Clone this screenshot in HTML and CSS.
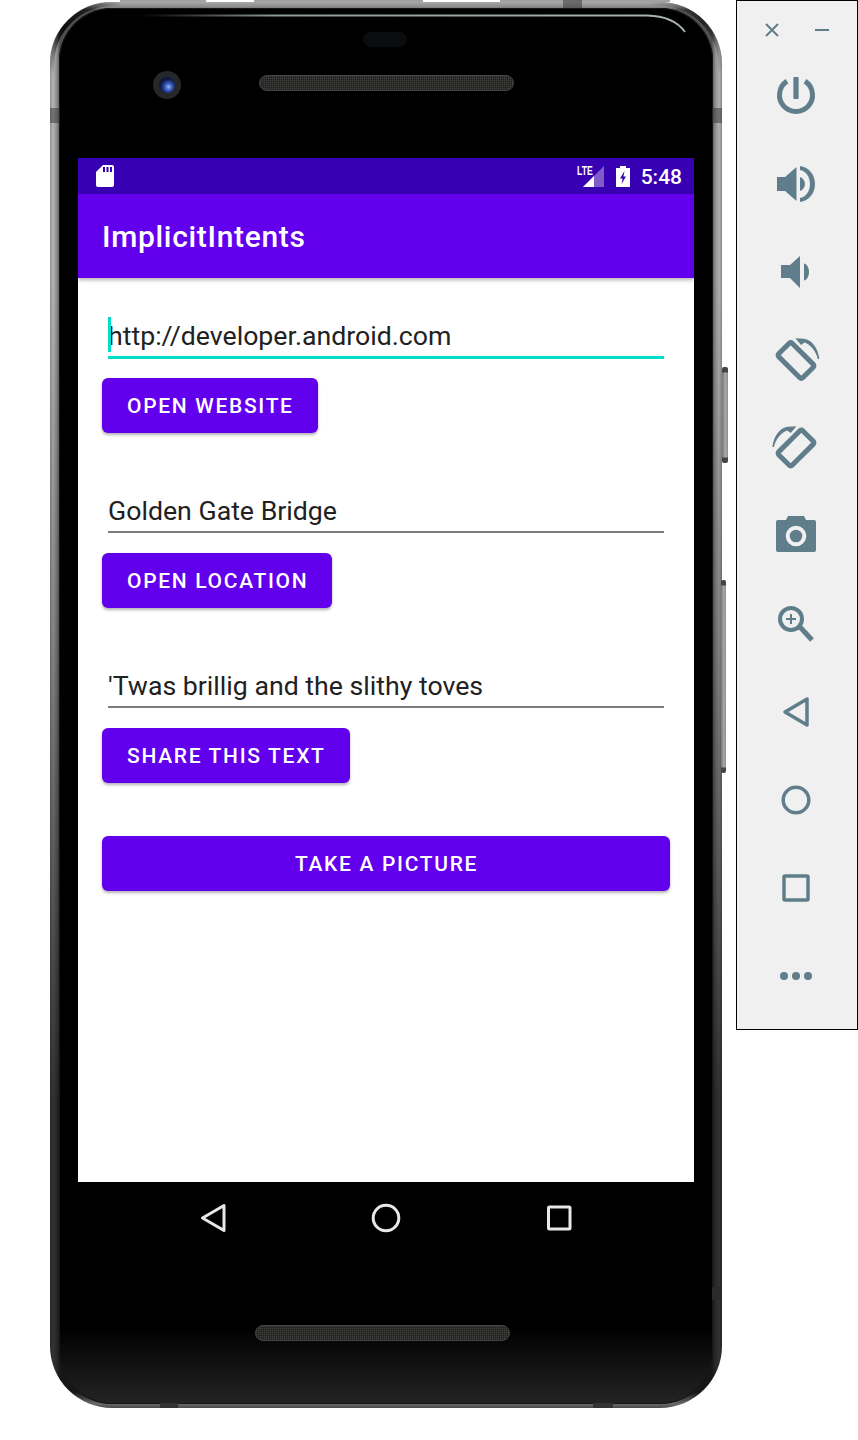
FILE: index.html
```html
<!DOCTYPE html>
<html lang="en">
<head>
    <meta charset="UTF-8">
    <meta name="viewport" content="width=device-width, initial-scale=1.0">
    <title>ImplicitIntents</title>
    <link rel="stylesheet" href="styles.css">
</head>
<body>
    <div class="phone">
        <!-- Hardware details on the bezel -->
        <div class="side-key side-key-top"></div>
        <div class="side-key side-key-bottom"></div>
        <div class="strip strip-a"></div>
        <div class="strip strip-b"></div>
        <div class="strip strip-c"></div>
        <div class="seam seam-top"></div>
        <div class="seam seam-left"></div>
        <div class="seam seam-right"></div>
        <div class="seam seam-right-low"></div>
        <div class="seam seam-bottom-left"></div>
        <div class="seam seam-bottom-right"></div>
        <svg class="glare" width="672" height="1406" viewBox="0 0 672 1406">
            <defs>
                <linearGradient id="glare-fade" gradientUnits="userSpaceOnUse" x1="90" x2="636" y1="0" y2="0">
                    <stop offset="0" stop-color="#8f9a9c" stop-opacity="0"/>
                    <stop offset="0.25" stop-color="#8f9a9c"/>
                    <stop offset="1" stop-color="#a9b3b4"/>
                </linearGradient>
                <linearGradient id="corner-left" gradientUnits="userSpaceOnUse" x1="0" y1="70" x2="70" y2="0">
                    <stop offset="0" stop-color="#000" stop-opacity="0"/>
                    <stop offset="0.4" stop-color="#000" stop-opacity="0.85"/>
                    <stop offset="0.7" stop-color="#000" stop-opacity="0.6"/>
                    <stop offset="1" stop-color="#000" stop-opacity="0"/>
                </linearGradient>
                <linearGradient id="corner-right" gradientUnits="userSpaceOnUse" x1="672" y1="70" x2="602" y2="0">
                    <stop offset="0" stop-color="#000" stop-opacity="0"/>
                    <stop offset="0.5" stop-color="#000" stop-opacity="0.55"/>
                    <stop offset="1" stop-color="#000" stop-opacity="0"/>
                </linearGradient>
            </defs>
            <path d="M90 13.5H597C616 14 628 20 635 30" fill="none" stroke="url(#glare-fade)" stroke-width="1.8"/>
            <path d="M2 72V62A60 60 0 0 1 62 2H72" fill="none" stroke="url(#corner-left)" stroke-width="4.5"/>
            <path d="M670 72V62A60 60 0 0 0 610 2H600" fill="none" stroke="url(#corner-right)" stroke-width="4"/>
        </svg>
        <div class="sensor"></div>
        <div class="camera"><div class="lens"></div></div>
        <div class="speaker speaker-top"></div>
        <div class="speaker speaker-bottom"></div>

        <div class="bezel">
            <div class="screen">
                <div class="status-bar">
                    <svg class="sd-icon" width="18" height="22" viewBox="0 0 18 22">
                        <path d="M7 0H16a2 2 0 0 1 2 2V20a2 2 0 0 1-2 2H2a2 2 0 0 1-2-2V7Z" fill="#fff"/>
                        <path d="M7 2h2v5H7zM10.5 2h2v5h-2zM14 2h2v5h-2z" fill="#3700b3"/>
                    </svg>
                    <div class="status-right">
                        <div class="signal">
                            <span class="lte">LTE</span>
                            <svg width="21" height="21" viewBox="0 0 21 21">
                                <path d="M21 0V21H0Z" fill="#7f5cc8"/>
                                <path d="M11 10V21H0Z" fill="#fff"/>
                            </svg>
                        </div>
                        <svg class="battery" width="14" height="21" viewBox="0 0 14 21">
                            <path d="M4 0h6v2h4v19H0V2h4Z" fill="#fff"/>
                            <path d="M8.5 5 4 12.5h2.6L5.5 18 10 10.5H7.4Z" fill="#3700b3"/>
                        </svg>
                        <span class="clock">5:48</span>
                    </div>
                </div>
                <div class="app-bar">ImplicitIntents</div>
                <div class="content">
                    <div class="group">
                        <div class="field field-focused"><span class="cursor"></span>http://developer.android.com</div>
                        <button class="btn">Open Website</button>
                    </div>
                    <div class="group">
                        <div class="field">Golden Gate Bridge</div>
                        <button class="btn">Open Location</button>
                    </div>
                    <div class="group group-last">
                        <div class="field">'Twas brillig and the slithy toves</div>
                        <button class="btn">Share This Text</button>
                    </div>
                    <button class="btn btn-wide">Take a Picture</button>
                </div>
            </div>
            <div class="nav-bar">
                <svg width="40" height="40" viewBox="0 0 40 40"><path d="M9.5 20 31 7.5V32.5Z"/></svg>
                <svg width="40" height="40" viewBox="0 0 40 40"><circle cx="20" cy="20" r="12.8"/></svg>
                <svg width="40" height="40" viewBox="0 0 40 40"><rect x="9.5" y="9" width="21.5" height="22" rx="1"/></svg>
            </div>
        </div>
    </div>

    <div class="panel">
        <div class="panel-top">
            <svg width="16" height="16" viewBox="0 0 16 16"><path d="M2 2 14 14M14 2 2 14"/></svg>
            <svg width="16" height="16" viewBox="0 0 16 16"><path d="M1 8H15"/></svg>
        </div>
        <!-- power -->
        <div class="tool"><svg width="44" height="44" viewBox="0 0 44 44">
            <path class="line-5" d="M13 7.2A16.5 16.5 0 1 0 31 7.2"/>
            <rect class="solid" x="19.4" y="3" width="5.2" height="22" rx="1"/>
        </svg></div>
        <!-- volume up -->
        <div class="tool"><svg width="44" height="44" viewBox="0 0 44 44">
            <path class="solid" d="M3 15H11L22.5 5V39L11 29H3Z"/>
            <path class="solid" d="M26 15C29 16 31 19 31 22C31 25 29 28 26 29Z"/>
            <path class="solid" d="M26 4C35 5 41 13 41 22C41 31 35 39 26 40V36C32 35 36 29 36 22C36 15 32 9 26 8Z"/>
        </svg></div>
        <!-- volume down -->
        <div class="tool"><svg width="44" height="44" viewBox="0 0 44 44">
            <path class="solid" d="M7 15H16L26 6V38L16 28H7Z"/>
            <path class="solid" d="M30 13.5C33 14 35 18 35 22C35 26 33 30 30 30.5Z"/>
        </svg></div>
        <!-- rotate left -->
        <div class="tool"><svg width="44" height="44" viewBox="0 0 44 44">
            <rect class="line-5" x="5" y="13" width="34" height="19" rx="2" transform="rotate(45 22 22.5)"/>
            <path class="solid" d="M21.3.3 30 .8C38 2 44 10 45.3 21H43.7C42 13 37 7 30.5 4.5L27 7Z"/>
        </svg></div>
        <!-- rotate right -->
        <div class="tool"><svg width="44" height="44" viewBox="0 0 44 44">
            <rect class="line-5" x="5" y="12.5" width="34" height="19" rx="2" transform="rotate(-45 22 22)"/>
            <path class="solid" d="M21.3.3 30 .8C38 2 44 10 45.3 21H43.7C42 13 37 7 30.5 4.5L27 7Z" transform="matrix(-1 0 0 1 43.7 0)"/>
        </svg></div>
        <!-- screenshot -->
        <div class="tool"><svg width="44" height="44" viewBox="0 0 44 44">
            <path class="solid" d="M4 6H12L14 2H30L32 6H40A2 2 0 0 1 42 8V36A2 2 0 0 1 40 38H4A2 2 0 0 1 2 36V8A2 2 0 0 1 4 6Z"/>
            <circle class="ring" cx="22" cy="22" r="8.3"/>
        </svg></div>
        <!-- zoom -->
        <div class="tool"><svg width="44" height="44" viewBox="0 0 44 44">
            <circle class="line-4" cx="17" cy="17" r="11"/>
            <path class="line-2" d="M12 17H22M17 12V22"/>
            <path class="line-5" d="M26 25 38 38"/>
        </svg></div>
        <!-- back -->
        <div class="tool"><svg width="44" height="44" viewBox="0 0 44 44"><path class="line-3" d="M11 22 33 9V35Z"/></svg></div>
        <!-- home -->
        <div class="tool"><svg width="44" height="44" viewBox="0 0 44 44"><circle class="line-3" cx="22" cy="22" r="12.8"/></svg></div>
        <!-- overview -->
        <div class="tool"><svg width="44" height="44" viewBox="0 0 44 44"><rect class="line-3" x="10" y="10" width="24" height="24" rx="1"/></svg></div>
        <!-- more -->
        <div class="tool"><svg width="44" height="44" viewBox="0 0 44 44">
            <circle class="solid" cx="10" cy="22" r="4"/>
            <circle class="solid" cx="22" cy="22" r="4"/>
            <circle class="solid" cx="34" cy="22" r="4"/>
        </svg></div>
    </div>
</body>
</html>
```

FILE: styles.css
```css
html, body {
    margin: 0;
    height: 1440px;
    background: #fff;
    overflow: hidden;
}
body {
    display: flex;
    align-items: flex-start;
    padding-left: 50px;
    box-sizing: border-box;
    font-family: Roboto, sans-serif;
}

/* Device shell */
.phone {
    position: relative;
    flex: none;
    width: 672px;
    height: 1406px;
    margin-top: 2px;
    padding: 6px 9px 4px 9px;
    box-sizing: border-box;
    border-radius: 62px;
    background:
        linear-gradient(to bottom, #a8a8a8 0, #8a8a8a 5px, transparent 8px),
        linear-gradient(to bottom, transparent 1390px, #6a6a6a 1402px, #4a4a4a 1406px),
        linear-gradient(to bottom, transparent 20%, rgba(0, 0, 0, 0.25) 45%, rgba(0, 0, 0, 0.72) 78%),
        linear-gradient(to right, #8f8f8f 0, #b5b5b5 3px, #8a8a8a 7px, #505050 10px, #505050 662px, #8a8a8a 665px, #b0b0b0 669px, #888 672px);
}
.bezel {
    height: 100%;
    box-sizing: border-box;
    padding: 150px 19px 0;
    border-radius: 53px;
    background: linear-gradient(to bottom, #000 94.5%, #242424 100%);
    box-shadow: inset 0 0 0 1px #161616;
}
.side-key {
    position: absolute;
    background:
        linear-gradient(to bottom, #444 0 5px, transparent 6px, transparent calc(100% - 6px), #444 calc(100% - 5px)),
        linear-gradient(to right, #777, #aaa 60%, #8a8a8a);
    border-radius: 2px;
}
.side-key-top {
    right: -6px;
    top: 365px;
    width: 6px;
    height: 96px;
}
.side-key-bottom {
    right: -4px;
    top: 578px;
    width: 5px;
    height: 193px;
}
.strip {
    position: absolute;
    top: -2px;
    height: 2px;
    background: #a3a3a3;
}
.strip-a {
    left: 70px;
    width: 86px;
}
.strip-b {
    left: 204px;
    width: 169px;
}
.strip-c {
    left: 450px;
    width: 170px;
}
.seam {
    position: absolute;
    background: rgba(50, 50, 50, 0.5);
}
.seam-top {
    left: 513px;
    top: -2px;
    width: 19px;
    height: 8px;
}
.seam-left {
    left: 0;
    top: 106px;
    width: 10px;
    height: 15px;
}
.seam-right {
    right: 0;
    top: 106px;
    width: 10px;
    height: 15px;
}
.seam-right-low {
    right: 0;
    top: 1285px;
    width: 10px;
    height: 13px;
    background: #2a2a2a;
}
.seam-bottom-left {
    left: 110px;
    bottom: 0;
    width: 18px;
    height: 5px;
    background: #333;
}
.seam-bottom-right {
    left: 543px;
    bottom: 0;
    width: 20px;
    height: 5px;
    background: #333;
}
.glare {
    position: absolute;
    left: 0;
    top: 0;
}
.sensor {
    position: absolute;
    left: 313px;
    top: 30px;
    width: 44px;
    height: 15px;
    border-radius: 8px;
    background: #0b0c10;
}
.camera {
    position: absolute;
    left: 103px;
    top: 69px;
    width: 28px;
    height: 28px;
    display: flex;
    align-items: center;
    justify-content: center;
    border-radius: 50%;
    background: #26272a;
}
.lens {
    width: 16px;
    height: 16px;
    border-radius: 50%;
    background: radial-gradient(circle at 60% 62%, #9db4f0 0, #3a5cc0 25%, #0f1c4a 55%, #05070f 100%);
}
.speaker {
    position: absolute;
    height: 16px;
    box-sizing: border-box;
    border: 1.5px solid #454545;
    border-radius: 8px;
    background:
        repeating-linear-gradient(0deg, rgba(0, 0, 0, 0.25) 0 1px, transparent 1px 2px),
        repeating-linear-gradient(90deg, #3f3f3d 0 1px, #2a2a28 1px 2px);
}
.speaker-top {
    left: 209px;
    top: 73px;
    width: 255px;
}
.speaker-bottom {
    left: 205px;
    top: 1323px;
    width: 255px;
}

/* Android screen */
.screen {
    width: 616px;
    height: 1024px;
    display: flex;
    flex-direction: column;
    background: #fff;
}
.status-bar {
    height: 36px;
    flex: none;
    display: flex;
    align-items: center;
    justify-content: space-between;
    padding: 0 12px 0 18px;
    background: #3700b3;
    color: #fff;
}
.status-right {
    display: flex;
    align-items: center;
}
.signal {
    position: relative;
    display: flex;
    margin-right: 12px;
    padding-top: 1px;
}
.lte {
    position: absolute;
    left: -6px;
    top: -1px;
    font: 700 12px "Liberation Sans", sans-serif;
    transform: scaleX(.72);
    transform-origin: left top;
}
.battery {
    margin-right: 11px;
}
.clock {
    font-size: 21px;
    font-weight: 500;
    padding-top: 1px;
}
.app-bar {
    height: 84px;
    flex: none;
    display: flex;
    align-items: center;
    padding: 1px 0 0 24px;
    box-sizing: border-box;
    background: #6200ee;
    color: #fff;
    font-size: 30px;
    font-weight: 500;
    letter-spacing: 0.68px;
    box-shadow: 0 2px 4px rgba(0, 0, 0, 0.3);
    position: relative;
}
.content {
    padding: 39px 24px 0;
}
.group {
    margin-bottom: 59px;
}
.group-last {
    margin-bottom: 53px;
}
.field {
    position: relative;
    height: 41px;
    box-sizing: border-box;
    margin: 0 6px 20px;
    border-bottom: 2px solid #7c7c7c;
    color: #212121;
    font-size: 26.7px;
    line-height: 39px;
    white-space: nowrap;
}
.field-focused {
    height: 42px;
    margin-bottom: 19px;
    border-bottom: 3px solid #00dec8;
}
.cursor {
    position: absolute;
    left: 0;
    top: 0;
    width: 2.5px;
    height: 35px;
    background: #00dec8;
}
.btn {
    display: inline-block;
    height: 55px;
    padding: 0 24px 0 25px;
    border: none;
    border-radius: 6px;
    background: #6200ee;
    color: #fff;
    font-family: Roboto, sans-serif;
    font-size: 21px;
    font-weight: 500;
    letter-spacing: 1.68px;
    text-transform: uppercase;
    box-shadow: 0 2px 3px rgba(0, 0, 0, 0.3);
}
.btn-wide {
    display: block;
    width: 100%;
}
.nav-bar {
    display: flex;
    justify-content: center;
    gap: 133px;
    padding-top: 16px;
}
.nav-bar svg {
    fill: none;
    stroke: #e8e8e8;
    stroke-width: 3;
    stroke-linejoin: round;
}

/* Emulator toolbar */
.panel {
    flex: none;
    width: 122px;
    height: 1030px;
    margin-left: 14px;
    box-sizing: border-box;
    border: 1px solid #000;
    background: #f0f0f0;
}
.panel-top {
    height: 51px;
    display: flex;
    justify-content: space-between;
    align-items: flex-start;
    padding: 21px 27px 0 27px;
    box-sizing: border-box;
}
.panel-top svg {
    fill: none;
    stroke: #607d8b;
    stroke-width: 2;
}
.tool {
    height: 88px;
    display: flex;
    align-items: center;
    justify-content: center;
    padding-right: 2px;
}
.tool svg {
    overflow: visible;
}
.solid {
    fill: #607d8b;
}
.ring {
    fill: #607d8b;
    stroke: #f0f0f0;
    stroke-width: 4;
}
.line-2, .line-3, .line-4, .line-5 {
    fill: none;
    stroke: #607d8b;
    stroke-linejoin: round;
}
.line-2 { stroke-width: 2; }
.line-3 { stroke-width: 3.5; }
.line-4 { stroke-width: 4; }
.line-5 { stroke-width: 5; }
```
